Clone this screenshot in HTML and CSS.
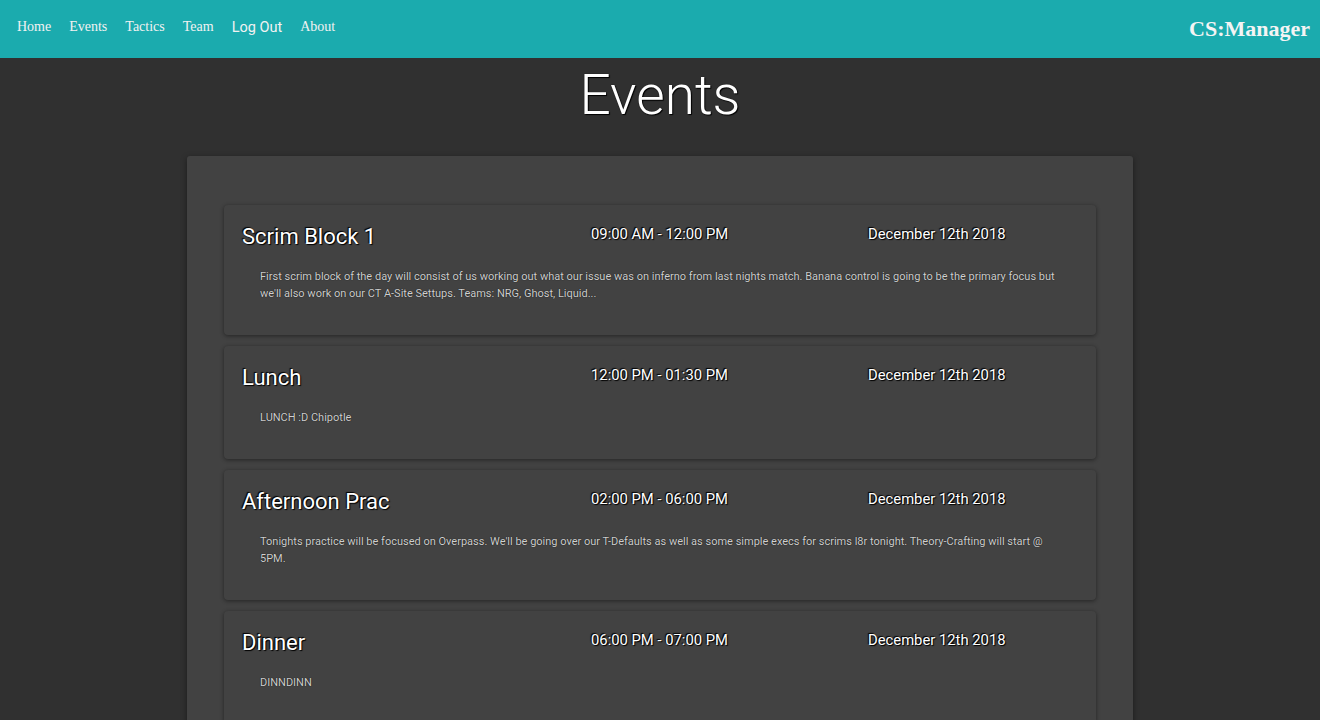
FILE: index.html
```html
<!DOCTYPE html>
<html>
<head>
<meta charset="utf-8">
<title>CS:Manager - Events</title>
<link rel="stylesheet" href="styles.css">
</head>
<body>
<header class="topbar">
  <nav class="nav">
    <a class="nav-link" href="#">Home</a>
    <a class="nav-link" href="#">Events</a>
    <a class="nav-link" href="#">Tactics</a>
    <a class="nav-link" href="#">Team</a>
    <a class="nav-link nav-sans" href="#">Log Out</a>
    <a class="nav-link" href="#">About</a>
  </nav>
  <div class="brand">CS:Manager</div>
</header>
<main class="main">
  <h1 class="page-title">Events</h1>
  <section class="panel">
    <article class="card">
      <div class="card-head">
        <h2 class="card-title">Scrim Block 1</h2>
        <div class="card-time">09:00 AM - 12:00 PM</div>
        <div class="card-date">December 12th 2018</div>
      </div>
      <p class="card-desc">First scrim block of the day will consist of us working out what our issue was on inferno from last nights match. Banana control is going to be the primary focus but we'll also work on our CT A-Site Settups. Teams: NRG, Ghost, Liquid...</p>
    </article>
    <article class="card">
      <div class="card-head">
        <h2 class="card-title">Lunch</h2>
        <div class="card-time">12:00 PM - 01:30 PM</div>
        <div class="card-date">December 12th 2018</div>
      </div>
      <p class="card-desc">LUNCH :D Chipotle</p>
    </article>
    <article class="card">
      <div class="card-head">
        <h2 class="card-title">Afternoon Prac</h2>
        <div class="card-time">02:00 PM - 06:00 PM</div>
        <div class="card-date">December 12th 2018</div>
      </div>
      <p class="card-desc">Tonights practice will be focused on Overpass. We'll be going over our T-Defaults as well as some simple execs for scrims l8r tonight. Theory-Crafting will start @ 5PM.</p>
    </article>
    <article class="card">
      <div class="card-head">
        <h2 class="card-title">Dinner</h2>
        <div class="card-time">06:00 PM - 07:00 PM</div>
        <div class="card-date">December 12th 2018</div>
      </div>
      <p class="card-desc">DINNDINN</p>
    </article>
  </section>
</main>
</body>
</html>
```
FILE: styles.css
```css
html, body {
  margin: 0;
  padding: 0;
}
body {
  background: #303030;
  color: #ffffff;
  font-family: Roboto, "Liberation Sans", sans-serif;
  overflow: hidden;
}
.topbar {
  height: 58px;
  background: #1babae;
  display: flex;
  align-items: center;
  justify-content: space-between;
  padding: 0 10px 0 17px;
}
.nav {
  display: flex;
  align-items: baseline;
  gap: 18px;
  margin-top: -6px;
}
.nav-link {
  color: #f2f2f2;
  text-decoration: none;
  font-family: "Liberation Serif", serif;
  font-size: 14px;
}
.nav-sans {
  font-family: Roboto, "Liberation Sans", sans-serif;
  font-size: 14.5px;
  position: relative;
  top: 1px;
}
.brand {
  font-family: "Liberation Serif", serif;
  font-weight: bold;
  font-size: 22px;
  color: #f4f4f4;
  margin-top: -1px;
}
.main {
  display: flex;
  flex-direction: column;
  align-items: center;
}
.page-title {
  margin: 4px 0 27px;
  font-weight: 300;
  font-size: 55px;
  line-height: 67px;
  color: #ffffff;
  text-shadow: 0 0 1px #000, 1px 1px 1px #000;
}
.panel {
  width: 946px;
  box-sizing: border-box;
  background: #424242;
  border-radius: 3px;
  box-shadow: 0 2px 6px rgba(0,0,0,0.45);
  padding: 49px 37px 40px 37px;
  display: flex;
  flex-direction: column;
  gap: 11px;
}
.card {
  background: #424242;
  border-radius: 4px;
  box-shadow: 0 1px 4px rgba(0,0,0,0.45);
  padding: 18px 18px 33px 18px;
}
.card-head {
  display: grid;
  grid-template-columns: 349px 277px 1fr;
  align-items: start;
}
.card-title {
  margin: 0;
  font-weight: 400;
  font-size: 22px;
  line-height: 28px;
  text-shadow: 1px 1px 1px #000, -1px -1px 1px #000;
}
.card-time, .card-date {
  font-size: 14.8px;
  line-height: 20px;
  padding-top: 1px;
  text-shadow: 1px 1px 1px #000, -1px -1px 1px #000;
}
.card-desc {
  margin: 17px 0 0;
  padding: 0 18px;
  font-size: 11px;
  line-height: 17px;
  color: #cfcfcf;
  text-shadow: 0 0 1px #000;
}
```
